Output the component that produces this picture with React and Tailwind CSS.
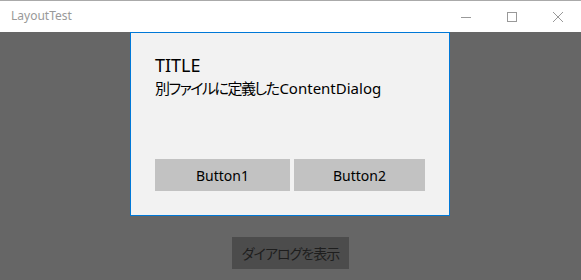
import React from 'react';

const font = "font-['Noto_Sans','Noto_Sans_CJK_JP',sans-serif]";

const TitleBar = () => (
  <div className="h-[32px] bg-white border-t border-[#aaaaaa] flex items-center justify-between shrink-0">
    <span className="pl-[11px] text-[12px] text-[#999999] leading-none pb-[1px]">LayoutTest</span>
    <div className="flex items-center h-full">
      {/* minimize */}
      <div className="w-[46px] h-full flex items-center justify-center">
        <svg width="10" height="10" viewBox="0 0 10 10">
          <line x1="0" y1="5.5" x2="10" y2="5.5" stroke="#999" strokeWidth="1" />
        </svg>
      </div>
      {/* maximize */}
      <div className="w-[46px] h-full flex items-center justify-center">
        <svg width="10" height="10" viewBox="0 0 10 10">
          <rect x="0.5" y="0.5" width="9" height="9" fill="none" stroke="#999" strokeWidth="1" />
        </svg>
      </div>
      {/* close */}
      <div className="w-[46px] h-full flex items-center justify-center">
        <svg width="10" height="10" viewBox="0 0 10 10">
          <path d="M0 0 L10 10 M10 0 L0 10" stroke="#999" strokeWidth="1" />
        </svg>
      </div>
    </div>
  </div>
);

export default function App() {
  return (
    <div className={`w-[581px] h-[280px] flex flex-col overflow-hidden ${font}`}>
      <TitleBar />
      <div className="flex-1 bg-[#666666] flex flex-col items-start pl-[130px]">
        {/* ContentDialog */}
        <div className="w-[320px] h-[184px] bg-[#f2f2f2] border border-[#0078d7] px-[24px] pt-[19px] pb-[24px] flex flex-col text-black">
          <h2 className="text-[18px] leading-[26px] font-normal">TITLE</h2>
          <p className="text-[15px] leading-[20px] [font-feature-settings:'palt']">
            <span className="tracking-[-1.5px] mr-[1px]">別ファイルに定義した</span>ContentDialog
          </p>
          <div className="mt-auto grid grid-cols-[135px_131px] gap-[4px]">
            <button className="h-[32px] bg-[#c2c2c2] text-[14px] text-black">Button1</button>
            <button className="h-[32px] bg-[#c2c2c2] text-[14px] text-black">Button2</button>
          </div>
        </div>
        <button className="mt-[21px] ml-[102px] w-[117px] h-[32px] bg-[#4c4c4c] text-[14px] text-[#1e1e1e] tracking-[-1px] [font-feature-settings:'palt']">
          ダイアログを表示
        </button>
      </div>
    </div>
  );
}
